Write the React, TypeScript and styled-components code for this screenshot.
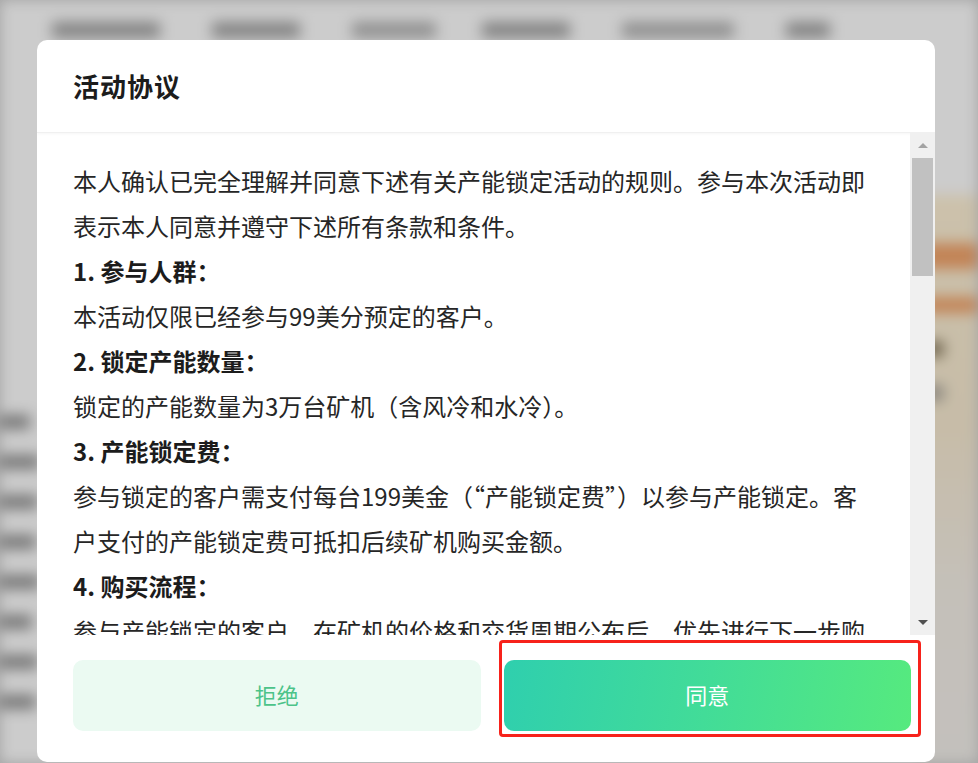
import React from "react";
import styled, { createGlobalStyle } from "styled-components";

const GlobalStyle = createGlobalStyle`
  html, body { margin: 0; padding: 0; }
  body {
    width: 978px;
    height: 763px;
    overflow: hidden;
    background: #cccccc;
    font-family: "Noto Sans CJK SC", "Noto Sans", sans-serif;
  }
  * { box-sizing: border-box; }
`;

const Stage = styled.div`
  position: relative;
  width: 978px;
  height: 763px;
  overflow: hidden;
`;

/* ---------- blurred page behind the modal ---------- */
const BackPage = styled.div`
  width: 978px;
  height: 763px;
  background: #ffffff;
  display: flex;
  flex-direction: column;
  filter: blur(7px);
`;

const BackNav = styled.div`
  height: 60px;
  display: flex;
  align-items: center;
  padding: 0 0 0 52px;
`;

const NavBlob = styled.div<{ $w: number; $gap: number; $dark?: boolean }>`
  width: ${(p) => p.$w}px;
  height: 16px;
  margin-right: ${(p) => p.$gap}px;
  background: ${(p) => (p.$dark ? "#3a3a3a" : "#5a5a5a")};
  border-radius: 3px;
  opacity: 0.45;
`;

const BackBody = styled.div`
  flex: 1;
  display: flex;
  justify-content: space-between;
`;

const BackLeft = styled.div`
  width: 60px;
  padding-top: 355px;
  display: flex;
  flex-direction: column;
  gap: 26px;
`;

const BackLine = styled.div<{ $w: number }>`
  width: ${(p) => p.$w}px;
  height: 14px;
  background: #2a2a2a;
  opacity: 0.5;
`;

const BackRight = styled.div`
  width: 60px;
  margin-top: 135px;
  background: linear-gradient(180deg, #fff2d6 0%, #f9ecd2 40%, #f6f0e8 70%, #f4f1ec 100%);
  display: flex;
  flex-direction: column;
  padding: 48px 0 0 4px;
  gap: 28px;
`;

const BackAccent = styled.div<{ $w: number; $c: string; $h: number }>`
  width: ${(p) => p.$w}px;
  height: ${(p) => p.$h}px;
  background: ${(p) => p.$c};
  border-radius: 4px;
`;

const Overlay = styled.div`
  position: absolute;
  inset: 0;
  background: rgba(0, 0, 0, 0.2);
  display: flex;
  align-items: flex-start;
  padding: 40px 0 0 37px;
`;

/* ---------- modal ---------- */
const Dialog = styled.div`
  position: relative;
  width: 898px;
  height: 722px;
  background: #ffffff;
  border-radius: 10px;
  display: flex;
  flex-direction: column;
  overflow: hidden;
`;

const Header = styled.div`
  height: 93px;
  flex: none;
  display: flex;
  align-items: center;
  padding: 0 36px;
  border-bottom: 1px solid #f0f0f0;
  box-shadow: 0 1px 3px rgba(0, 0, 0, 0.04);
`;

const Title = styled.h2`
  margin: 0;
  font-size: 26px;
  font-weight: 700;
  letter-spacing: 1px;
  color: #1c1c1c;
  padding-bottom: 2px;
`;

const BodyRow = styled.div`
  height: 502px;
  flex: none;
  display: flex;
`;

const Content = styled.div`
  flex: 1;
  overflow: hidden;
  padding: 25px 36px 0 36px;
  color: #262626;
  font-size: 24px;
  line-height: 45px;
`;

const Para = styled.p<{ $bold?: boolean }>`
  margin: 0;
  font-weight: ${(p) => (p.$bold ? 700 : 400)};
  color: ${(p) => (p.$bold ? "#1c1c1c" : "#262626")};
`;

const ScrollTrack = styled.div`
  width: 25px;
  flex: none;
  background: #f0f0f0;
  display: flex;
  flex-direction: column;
  align-items: center;
`;

const ArrowBox = styled.div`
  height: 25px;
  width: 25px;
  display: flex;
  align-items: center;
  justify-content: center;
  flex: none;
`;

const Arrow = styled.div<{ $dir: "up" | "down" }>`
  width: 0;
  height: 0;
  border-left: 5px solid transparent;
  border-right: 5px solid transparent;
  ${(p) =>
    p.$dir === "up"
      ? "border-bottom: 5px solid #a3a3a3;"
      : "border-top: 5px solid #505050;"}
`;

const Thumb = styled.div`
  width: 21px;
  height: 118px;
  background: #c1c1c1;
  flex: none;
  margin-left: 2px;
  align-self: flex-start;
`;

const TrackSpacer = styled.div`
  flex: 1;
`;

const Footer = styled.div`
  flex: 1;
  display: flex;
  gap: 23px;
  padding: 25px 24px 0 36px;
`;

const Button = styled.button<{ $primary?: boolean }>`
  flex: 1;
  height: 71px;
  border: none;
  border-radius: 10px;
  font-family: inherit;
  font-size: 22px;
  padding: 0 0 3px 0;
  cursor: pointer;
  background: ${(p) =>
    p.$primary
      ? "linear-gradient(100deg, #2fcfae 0%, #42dc98 50%, #56ea7e 100%)"
      : "#ebfaf2"};
  color: ${(p) => (p.$primary ? "#ffffff" : "#4cc389")};
`;

const Annotation = styled.div`
  position: absolute;
  left: 462px;
  top: 600px;
  width: 422px;
  height: 97px;
  border: 3px solid #f7221b;
  border-radius: 4px;
  pointer-events: none;
`;

const paragraphs: { text: string; bold?: boolean }[] = [
  {
    text: "本人确认已完全理解并同意下述有关产能锁定活动的规则。参与本次活动即表示本人同意并遵守下述所有条款和条件。",
  },
  { text: "1. 参与人群：", bold: true },
  { text: "本活动仅限已经参与99美分预定的客户。" },
  { text: "2. 锁定产能数量：", bold: true },
  { text: "锁定的产能数量为3万台矿机（含风冷和水冷）。" },
  { text: "3. 产能锁定费：", bold: true },
  {
    text: "参与锁定的客户需支付每台199美金（“产能锁定费”）以参与产能锁定。客户支付的产能锁定费可抵扣后续矿机购买金额。",
  },
  { text: "4. 购买流程：", bold: true },
  {
    text: "参与产能锁定的客户，在矿机的价格和交货周期公布后，优先进行下一步购买。",
  },
];

export default function App() {
  return (
    <>
      <GlobalStyle />
      <Stage>
        <BackPage>
          <BackNav>
            <NavBlob $w={108} $gap={52} $dark />
            <NavBlob $w={88} $gap={52} $dark />
            <NavBlob $w={84} $gap={46} />
            <NavBlob $w={88} $gap={52} $dark />
            <NavBlob $w={112} $gap={52} />
            <NavBlob $w={44} $gap={0} $dark />
          </BackNav>
          <BackBody>
            <BackLeft>
              <BackLine $w={30} />
              <BackLine $w={40} />
              <BackLine $w={38} />
              <BackLine $w={36} />
              <BackLine $w={40} />
              <BackLine $w={32} />
              <BackLine $w={38} />
              <BackLine $w={36} />
            </BackLeft>
            <BackRight>
              <BackAccent $w={56} $h={26} $c="#f3a56c" />
              <BackAccent $w={56} $h={16} $c="#f3a56c" />
              <BackAccent $w={22} $h={16} $c="#8f8266" />
              <BackAccent $w={22} $h={16} $c="#b0aaa0" />
            </BackRight>
          </BackBody>
        </BackPage>
        <Overlay>
          <Dialog>
            <Header>
              <Title>活动协议</Title>
            </Header>
            <BodyRow>
              <Content>
                {paragraphs.map((p, i) => (
                  <Para key={i} $bold={p.bold}>
                    {p.text}
                  </Para>
                ))}
              </Content>
              <ScrollTrack>
                <ArrowBox>
                  <Arrow $dir="up" />
                </ArrowBox>
                <Thumb />
                <TrackSpacer />
                <ArrowBox>
                  <Arrow $dir="down" />
                </ArrowBox>
              </ScrollTrack>
            </BodyRow>
            <Footer>
              <Button>拒绝</Button>
              <Button $primary>同意</Button>
            </Footer>
            <Annotation />
          </Dialog>
        </Overlay>
      </Stage>
    </>
  );
}
